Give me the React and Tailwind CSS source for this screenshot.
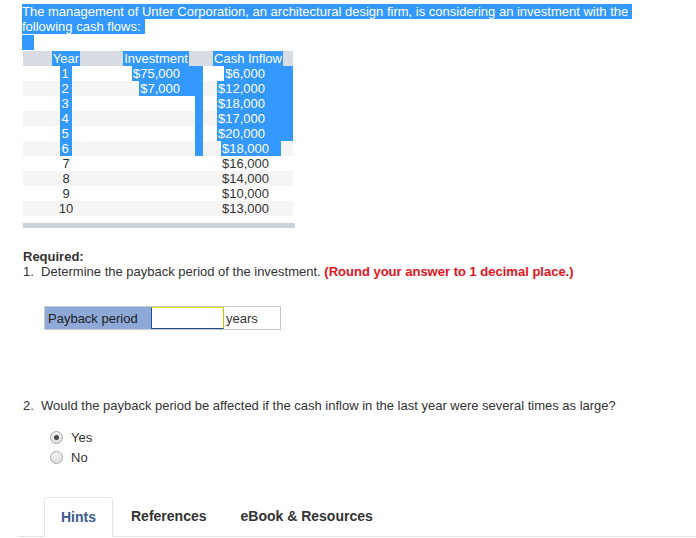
import React from "react";

const rows = [
  { y: "1", inv: "$75,000", cash: "$6,000" },
  { y: "2", inv: "$7,000", cash: "$12,000" },
  { y: "3", inv: "", cash: "$18,000" },
  { y: "4", inv: "", cash: "$17,000" },
  { y: "5", inv: "", cash: "$20,000" },
  { y: "6", inv: "", cash: "$18,000" },
  { y: "7", inv: "", cash: "$16,000" },
  { y: "8", inv: "", cash: "$14,000" },
  { y: "9", inv: "", cash: "$10,000" },
  { y: "10", inv: "", cash: "$13,000" },
];

const sel = "bg-[#3399ff] text-white";

function Radio({ checked, label }) {
  return (
    <label className="flex items-center h-[20px]">
      <span className="w-[13px] h-[13px] rounded-full border border-[#a9a9a9] bg-gradient-to-b from-[#f4f4f4] to-[#dedede] flex items-center justify-center">
        {checked && <span className="w-[5px] h-[5px] rounded-full bg-[#4a4a4a]" />}
      </span>
      <span className="ml-[8px]">{label}</span>
    </label>
  );
}

export default function App() {
  return (
    <div
      className="w-[696px] h-[538px] overflow-hidden bg-white text-[#333] text-[13px] leading-[15px]"
      style={{ fontFamily: '"Liberation Sans", Arial, sans-serif' }}
    >
      {/* intro paragraph, shown selected */}
      <div className="pl-[22px] pt-[4px]">
        <div>
          <span className={sel + " pr-[4px]"}>
            The management of Unter Corporation, an architectural design firm, is considering an investment with the
          </span>
        </div>
        <div>
          <span className={sel + " pr-[4px]"}>following cash flows:</span>
        </div>
        <div className={"w-[12px] h-[15px] mt-px " + sel} />
      </div>

      {/* cash flow table */}
      <div className="ml-[23px] mt-px w-[272px]">
        <div className="grid grid-cols-[86px_94px_90px] w-[270px] h-[15px] bg-[#d9dce3] text-center">
          <div>
            <span className={sel + " px-[1px]"}>Year</span>
          </div>
          <div>
            <span className={sel + " px-[1px]"}>Investment</span>
          </div>
          <div>
            <span className={sel + " px-[1px]"}>Cash Inflow</span>
          </div>
        </div>
        {rows.map((r, i) => {
          const picked = i < 6;
          return (
            <div
              key={r.y}
              className={
                "grid grid-cols-[86px_94px_90px] w-[270px] h-[15px] " +
                (i % 2 === 1 ? "bg-[#f5f5f5]" : "bg-white")
              }
            >
              <div className="text-center">
                <span className={picked ? sel + " pl-[1px] pr-[3px]" : ""}>{r.y}</span>
              </div>
              <div className="flex justify-end">
                {r.inv ? (
                  <span className={sel + " pl-[1px] pr-[23px]"}>{r.inv}</span>
                ) : picked ? (
                  <span className={"w-[8px] h-[15px] " + sel} />
                ) : null}
              </div>
              <div className="flex">
                <div className="w-[66px] flex justify-end">
                  <span className={picked ? sel + " pl-[1px]" : ""}>{r.cash}</span>
                </div>
                {picked && (
                  <div className={(i === 5 ? "w-[12px]" : "w-[28px]") + " h-[15px] shrink-0 " + sel} />
                )}
              </div>
            </div>
          );
        })}
        <div className="mt-[7px] h-[5px] w-[272px] bg-[#ccd1dc]" />
      </div>

      {/* part 1 */}
      <div className="pl-[23px] mt-[21px]">
        <div className="font-bold">Required:</div>
        <div>
          1.&nbsp;&nbsp;Determine the payback period of the investment.{" "}
          <span className="font-bold text-[#e8101a]">(Round your answer to 1 decimal place.)</span>
        </div>
      </div>

      <div className="ml-[44px] mt-[27px] flex w-[237px] h-[24px] border border-[#c9c9c9]">
        <div className="w-[106px] bg-[#8ea9d8] flex items-center pl-[3px] text-[#222]">Payback period</div>
        <div className="w-[73px] border border-t-[#e6e600] border-r-[#c9c900] border-l-[#1f4f8f] border-b-[#1f4f8f] bg-white" />
        <div className="flex-1 flex items-center pl-[2px]">years</div>
      </div>

      {/* part 2 */}
      <div className="pl-[23px] mt-[68px]">
        2.&nbsp;&nbsp;Would the payback period be affected if the cash inflow in the last year were several times as large?
      </div>
      <div className="pl-[50px] mt-[14px] flex flex-col">
        <Radio checked label="Yes" />
        <Radio label="No" />
      </div>

      {/* tabs */}
      <div className="mt-[30px] ml-[18px] border-b border-[#e5e5e5] flex items-end h-[40px] font-bold text-[14px]">
        <div className="ml-[26px] w-[69px] h-[40px] border border-b-0 border-[#e5e5e5] rounded-t-[3px] flex items-center justify-center text-[#3d5a8f] bg-white -mb-px">
          Hints
        </div>
        <div className="ml-[18px] h-[40px] flex items-center">References</div>
        <div className="ml-[34px] h-[40px] flex items-center">eBook &amp; Resources</div>
      </div>
    </div>
  );
}
